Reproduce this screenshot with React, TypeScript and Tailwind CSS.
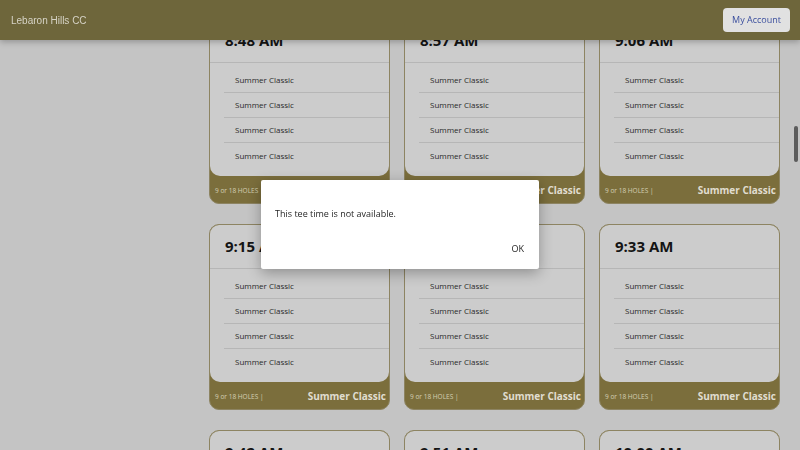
import React from "react";

type TeeTime = {
    time: string;
};

const rows: TeeTime[][] = [
    [{ time: "8:48 AM" }, { time: "8:57 AM" }, { time: "9:06 AM" }],
    [{ time: "9:15 AM" }, { time: "9:24 AM" }, { time: "9:33 AM" }],
    [{ time: "9:42 AM" }, { time: "9:51 AM" }, { time: "10:00 AM" }],
];

const players = ["Summer Classic", "Summer Classic", "Summer Classic", "Summer Classic"];

function TeeCard({ time }: TeeTime) {
    return (
        <div className="flex h-[186px] flex-col overflow-hidden rounded-[10px] border border-[#8d8462] bg-[#7b6e3c]">
            <div className="rounded-b-[10px] bg-[#cccccc] pb-[8px]">
                <div className="flex h-[44px] items-center border-b border-[#b6b6b6] pl-[15px]">
                    <span className="text-[15px] font-bold text-[#141414]">{time}</span>
                </div>
                <div className="ml-[14px] pt-[5px]">
                    {players.map((name, i) => (
                        <div
                            key={i}
                            className={
                                i < players.length - 1
                                    ? "flex h-[25px] items-center border-b border-[#b6b6b6] pl-[11px]"
                                    : "flex h-[25px] items-center pl-[11px]"
                            }
                        >
                            <span className="text-[8px] text-[#2a2a2a]">{name}</span>
                        </div>
                    ))}
                </div>
            </div>
            <div className="flex flex-1 items-center justify-between pl-[5px] pr-[3px] pt-[2px]">
                <span className="text-[6.5px] text-[#d4ceb4]">9 or 18 HOLES |</span>
                <span className="text-[10px] font-bold text-[#e0ddd0]">Summer Classic</span>
            </div>
        </div>
    );
}

export default function App() {
    return (
        <div className="relative h-[450px] w-[800px] overflow-hidden bg-[#c4c4c4] font-['Open_Sans',sans-serif]">
            {/* page content, scrolled */}
            <div className="pl-[209px] pr-[20px] pt-[18px]">
                <div className="flex flex-col gap-[20px]">
                    {rows.map((row, r) => (
                        <div key={r} className="grid grid-cols-3 gap-[14px]">
                            {row.map((t) => (
                                <TeeCard key={t.time} time={t.time} />
                            ))}
                        </div>
                    ))}
                </div>
            </div>

            {/* header */}
            <div className="fixed left-0 right-0 top-0 z-20 flex h-10 items-center justify-between bg-[#6e663b] pl-[11px] pr-[10px] shadow-[0_2px_6px_rgba(0,0,0,0.25)]">
                <span className="font-['Liberation_Sans',Arial,sans-serif] text-[10px] text-[#d6d3c6]">
                    Lebaron Hills CC
                </span>
                <button className="h-[24px] w-[67px] rounded-[4px] bg-[#e1e1e1] text-[9px] text-[#3b4f9e]">
                    My Account
                </button>
            </div>

            {/* scrollbar thumb */}
            <div className="fixed right-[2px] top-[126px] z-10 h-[36px] w-[4px] rounded-full bg-[#5c5c5c]" />

            {/* alert */}
            <div className="fixed left-[261px] top-[180px] z-30 flex h-[89px] w-[278px] flex-col justify-between rounded-[2px] bg-white px-[14px] pb-[14px] pt-[28px] shadow-[0_4px_14px_rgba(0,0,0,0.3)]">
                <p className="text-[9px] leading-[12px] text-[#262626]">This tee time is not available.</p>
                <div className="flex justify-end">
                    <span className="pr-[1px] text-[9px] text-[#1f1f1f]">OK</span>
                </div>
            </div>
        </div>
    );
}
